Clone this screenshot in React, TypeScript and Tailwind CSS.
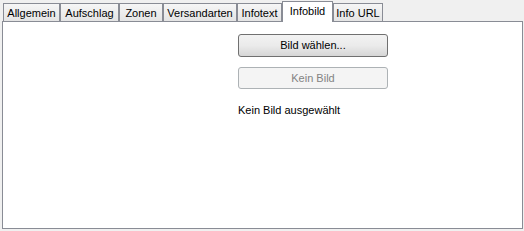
import React from "react";

const tabs = [
  { label: "Allgemein", w: 57 },
  { label: "Aufschlag", w: 59 },
  { label: "Zonen", w: 44 },
  { label: "Versandarten", w: 74 },
  { label: "Infotext", w: 45 },
  { label: "Infobild", w: 51, active: true },
  { label: "Info URL", w: 50 },
];

export default function App() {
  return (
    <div
      className="w-[524px] h-[231px] bg-[#f0f0f0] text-[11px] text-black overflow-hidden"
      style={{ fontFamily: '"Liberation Sans", Arial, sans-serif' }}
    >
      <div className="flex items-end h-[21px] pl-[3px]">
        {tabs.map((t) =>
          t.active ? (
            <div
              key={t.label}
              className="relative z-10 -mb-[1px] h-[21px] bg-white border border-b-0 border-[#898c95] flex items-start justify-center pt-[3px] leading-[13px]"
              style={{ width: t.w }}
            >
              {t.label}
            </div>
          ) : (
            <div
              key={t.label}
              className="h-[18px] bg-gradient-to-b from-[#f6f6f6] to-[#e4e4e4] border border-b-0 border-[#898c95] flex items-center justify-center pt-[2px] leading-[13px]"
              style={{ width: t.w }}
            >
              {t.label}
            </div>
          )
        )}
      </div>
      <div className="ml-[2px] w-[521px] h-[208px] bg-white border border-[#898c95] pl-[235px] pt-[12px]">
        <div className="flex flex-col gap-[10px] w-[150px]">
          <div className="h-[23px] rounded-[3px] border border-[#707070] bg-gradient-to-b from-[#f2f2f2] via-[#ebebeb] to-[#d6d6d6] flex items-center justify-center">
            Bild wählen...
          </div>
          <div className="h-[22px] rounded-[3px] border border-[#adb2b5] bg-[#f4f4f4] text-[#838383] flex items-center justify-center">
            Kein Bild
          </div>
        </div>
        <div className="mt-[15px] leading-[13px]">Kein Bild ausgewählt</div>
      </div>
    </div>
  );
}
